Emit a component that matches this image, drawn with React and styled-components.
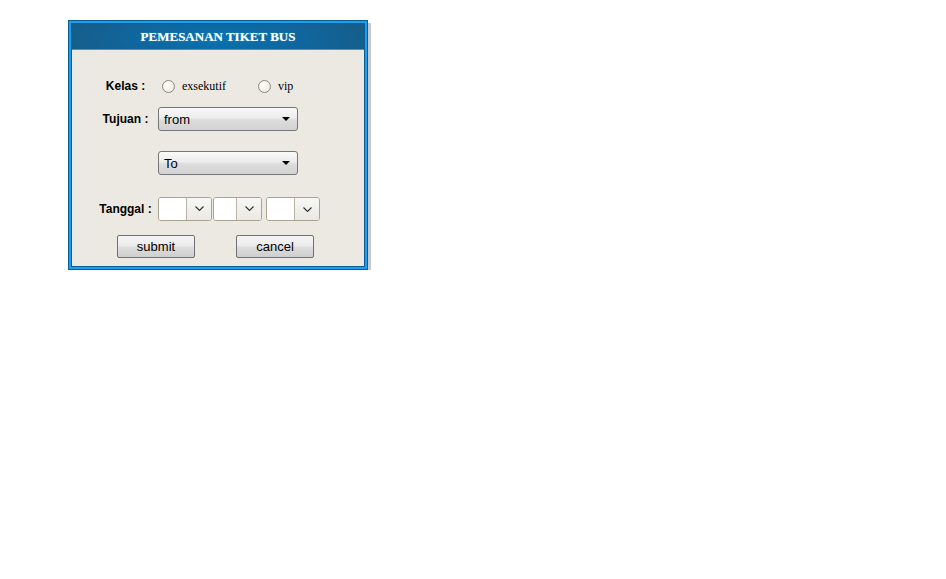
import React from "react";
import styled, { createGlobalStyle } from "styled-components";

const Global = createGlobalStyle`
  html, body { margin: 0; padding: 0; background: #ffffff; }
  body { font-family: "Liberation Sans", Arial, sans-serif; }
`;

const Page = styled.div`
  padding: 20px 0 0 68px;
`;

const Frame = styled.div`
  width: 294px;
  border: 1px solid #0d5d93;
  box-shadow: 3px 3px 0 #c9c9c9;
  background: #1b9ef0;
  padding: 2px;
`;

const Inner = styled.div`
  border: 1px solid #0d5d93;
  background: #ece9e2;
`;

const Header = styled.div`
  height: 25px;
  display: flex;
  align-items: center;
  justify-content: center;
  background: radial-gradient(ellipse 60% 140% at 50% 60%, #0872b2 0%, #0f67a0 45%, #175b83 100%);
  border-bottom: 1px solid #4f93c0;
  color: #ffffff;
  font-family: "Liberation Serif", "Times New Roman", serif;
  font-weight: bold;
  font-size: 13px;
  text-shadow: 0 0 1px rgba(180, 255, 240, 0.6);
`;

const Body = styled.div`
  display: flex;
  flex-direction: column;
  padding: 24px 0 8px 21px;
`;

const Row = styled.div`
  display: grid;
  grid-template-columns: 65px auto;
  align-items: center;
  height: ${(p) => p.$h}px;
  margin-top: ${(p) => p.$mt || 0}px;
`;

const Label = styled.div`
  text-align: center;
  font-size: 12px;
  font-weight: bold;
  color: #000;
`;

const Options = styled.div`
  display: flex;
  align-items: center;
`;

const RadioItem = styled.label`
  display: flex;
  align-items: center;
  margin-left: ${(p) => p.$ml}px;
  font-family: "Liberation Serif", "Times New Roman", serif;
  font-size: 12px;
  color: #000;
`;

const Radio = styled.span`
  width: 11px;
  height: 11px;
  border-radius: 50%;
  border: 1px solid #8f8a80;
  background: radial-gradient(circle at 40% 40%, #ffffff 0%, #f1efe9 60%, #dcd8cf 100%);
  margin-right: 7px;
`;

const SelectBox = styled.div`
  width: 128px;
  height: 22px;
  border: 1px solid #767676;
  border-radius: 3px;
  background: linear-gradient(to bottom, #fafafa 0%, #ececec 45%, #dcdcdc 55%, #d3d3d3 100%);
  display: flex;
  align-items: center;
  justify-content: space-between;
  padding: 0 5px;
  box-sizing: content-box;
  font-size: 13px;
  color: #000;
`;

const Arrow = styled.svg`
  width: 8px;
  height: 4px;
  margin-right: 2px;
`;

const Dates = styled.div`
  display: flex;
  align-items: center;
`;

const DateBox = styled.div`
  display: flex;
  width: ${(p) => p.$w}px;
  height: 22px;
  margin-left: ${(p) => p.$ml || 0}px;
  margin-top: ${(p) => p.$mt || 0}px;
  border: 1px solid #a9a392;
  border-radius: 3px;
  overflow: hidden;
  background: #fff;
`;

const DateField = styled.div`
  flex: 1;
  background: #fff;
  border-right: 1px solid #b9b4a6;
`;

const DateBtn = styled.div`
  width: 24px;
  display: flex;
  align-items: center;
  justify-content: center;
  background: linear-gradient(to bottom, #f7f7f5, #ebe9e4);
`;

const Buttons = styled.div`
  display: flex;
  margin-top: 14px;
  padding-left: 24px;
  gap: 41px;
`;

const Button = styled.button`
  width: 78px;
  height: 23px;
  border: 1px solid #707070;
  border-radius: 2px;
  background: linear-gradient(to bottom, #f4f4f4 0%, #ebebeb 48%, #dddddd 52%, #cfcfcf 100%);
  font-family: "Liberation Sans", Arial, sans-serif;
  font-size: 13px;
  color: #000;
  padding: 0;
`;

const Chevron = () => (
  <svg width="9" height="5" viewBox="0 0 9 5">
    <path d="M0.5 0.5 L4.5 4.5 L8.5 0.5" fill="none" stroke="#333" strokeWidth="1.1" />
  </svg>
);

const DateSelect = ({ w, ml, mt }) => (
  <DateBox $w={w} $ml={ml} $mt={mt}>
    <DateField />
    <DateBtn>
      <Chevron />
    </DateBtn>
  </DateBox>
);

const Select = ({ text }) => (
  <SelectBox>
    <span>{text}</span>
    <Arrow viewBox="0 0 8 4">
      <path d="M0 0 H8 L4 4 Z" fill="#000" />
    </Arrow>
  </SelectBox>
);

export default function App() {
  return (
    <Page>
      <Global />
      <Frame>
        <Inner>
          <Header>PEMESANAN TIKET BUS</Header>
          <Body>
            <Row $h={24}>
              <Label>Kelas :</Label>
              <Options>
                <RadioItem $ml={4}>
                  <Radio />
                  exsekutif
                </RadioItem>
                <RadioItem $ml={32}>
                  <Radio />
                  vip
                </RadioItem>
              </Options>
            </Row>
            <Row $h={24} $mt={9}>
              <Label>Tujuan :</Label>
              <Select text="from" />
            </Row>
            <Row $h={24} $mt={20}>
              <span />
              <Select text="To" />
            </Row>
            <Row $h={25} $mt={21}>
              <Label>Tanggal :</Label>
              <Dates>
                <DateSelect w={52} />
                <DateSelect w={47} ml={1} />
                <DateSelect w={52} ml={4} mt={1} />
              </Dates>
            </Row>
            <Buttons>
              <Button>submit</Button>
              <Button>cancel</Button>
            </Buttons>
          </Body>
        </Inner>
      </Frame>
    </Page>
  );
}
